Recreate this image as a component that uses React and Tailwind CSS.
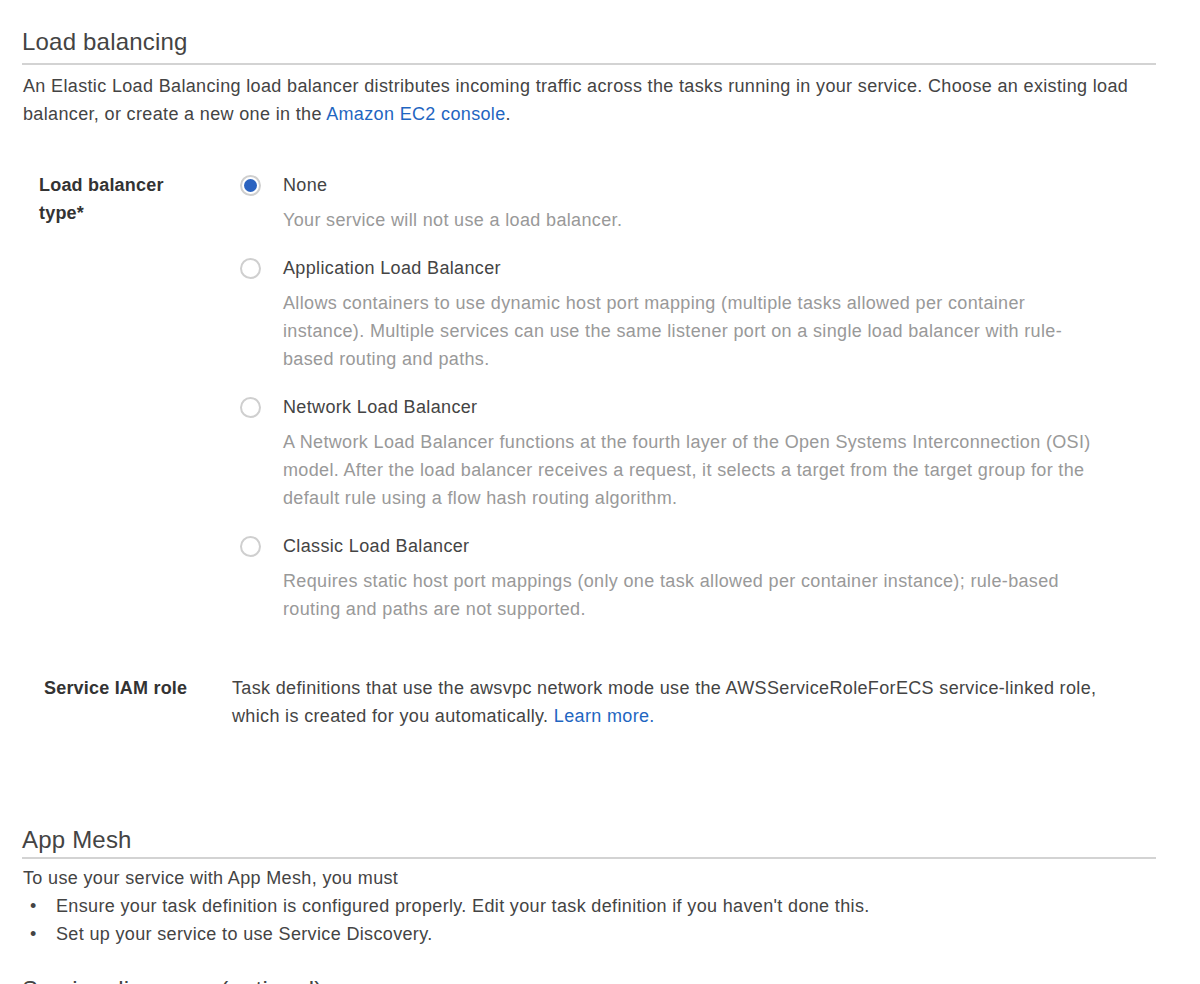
import React, { useState } from 'react';

const options = [
  {
    id: 'none',
    label: 'None',
    desc: ['Your service will not use a load balancer.'],
  },
  {
    id: 'alb',
    label: 'Application Load Balancer',
    desc: [
      'Allows containers to use dynamic host port mapping (multiple tasks allowed per container',
      'instance). Multiple services can use the same listener port on a single load balancer with rule-',
      'based routing and paths.',
    ],
  },
  {
    id: 'nlb',
    label: 'Network Load Balancer',
    desc: [
      'A Network Load Balancer functions at the fourth layer of the Open Systems Interconnection (OSI)',
      'model. After the load balancer receives a request, it selects a target from the target group for the',
      'default rule using a flow hash routing algorithm.',
    ],
  },
  {
    id: 'clb',
    label: 'Classic Load Balancer',
    desc: [
      'Requires static host port mappings (only one task allowed per container instance); rule-based',
      'routing and paths are not supported.',
    ],
  },
];

const Radio = ({ checked, onClick }) => (
  <button
    type="button"
    onClick={onClick}
    className="w-[21px] h-[21px] mt-[4px] rounded-full border-2 border-[#cfcfcf] bg-white flex items-center justify-center shrink-0"
  >
    {checked && <span className="w-[13px] h-[13px] rounded-full bg-[#2b63c0]" />}
  </button>
);

const SectionTitle = ({ children, tight }) => (
  <h2
    className={
      tight
        ? 'text-[24px] leading-[30px] tracking-[0.2px] text-[#444] pb-[2px] border-b-2 border-[#d3d3d3]'
        : 'text-[24px] leading-[30px] tracking-[0.2px] text-[#444] pb-[6px] border-b-2 border-[#d3d3d3]'
    }
  >
    {children}
  </h2>
);

const App = () => {
  const [lbType, setLbType] = useState('none');

  return (
    <div
      className="min-h-screen bg-white text-[#444] text-[18px] leading-[28px] tracking-[0.35px] pl-[22px] pr-[44px] overflow-hidden"
      style={{ fontFamily: '"Liberation Sans", Arial, Helvetica, sans-serif' }}
    >
      <div className="pt-[27px]">
        <SectionTitle>Load balancing</SectionTitle>
        <p className="mt-[7px] pl-[1px] whitespace-nowrap">
          An Elastic Load Balancing load balancer distributes incoming traffic across the tasks running in your service. Choose an existing load
          <br />
          balancer, or create a new one in the{' '}
          <a href="#" className="text-[#1f66c1]">
            Amazon EC2 console
          </a>
          .
        </p>

        <div className="flex mt-[43px]">
          <div className="w-[218px] pl-[17px] font-bold text-[#333] tracking-[0.2px]">
            Load balancer
            <br />
            type*
          </div>
          <div className="flex flex-col gap-[20px]">
            {options.map((o) => (
              <div key={o.id} className="flex gap-[22px]">
                <Radio checked={lbType === o.id} onClick={() => setLbType(o.id)} />
                <div>
                  <div className="text-[#444] cursor-pointer" onClick={() => setLbType(o.id)}>
                    {o.label}
                  </div>
                  <div className="mt-[7px] text-[#999] whitespace-nowrap">
                    {o.desc.map((d, i) => (
                      <div key={i}>{d}</div>
                    ))}
                  </div>
                </div>
              </div>
            ))}
          </div>
        </div>

        <div className="flex mt-[51px]">
          <div className="w-[210px] pl-[22px] font-bold text-[#333] tracking-[0.2px]">Service IAM role</div>
          <div className="whitespace-nowrap">
            Task definitions that use the awsvpc network mode use the AWSServiceRoleForECS service-linked role,
            <br />
            which is created for you automatically.{' '}
            <a href="#" className="text-[#1f66c1]">
              Learn more.
            </a>
          </div>
        </div>
      </div>

      <div className="mt-[95px]">
        <SectionTitle tight>App Mesh</SectionTitle>
        <div className="mt-[5px] pl-[1px]">To use your service with App Mesh, you must</div>
        <ul className="pl-[8px]">
          <li className="flex">
            <span className="w-[26px]">•</span>
            Ensure your task definition is configured properly. Edit your task definition if you haven't done this.
          </li>
          <li className="flex">
            <span className="w-[26px]">•</span>
            Set up your service to use Service Discovery.
          </li>
        </ul>
      </div>

      <div className="mt-[27px]">
        <SectionTitle>Service discovery (optional)</SectionTitle>
      </div>
    </div>
  );
};

export default App;
